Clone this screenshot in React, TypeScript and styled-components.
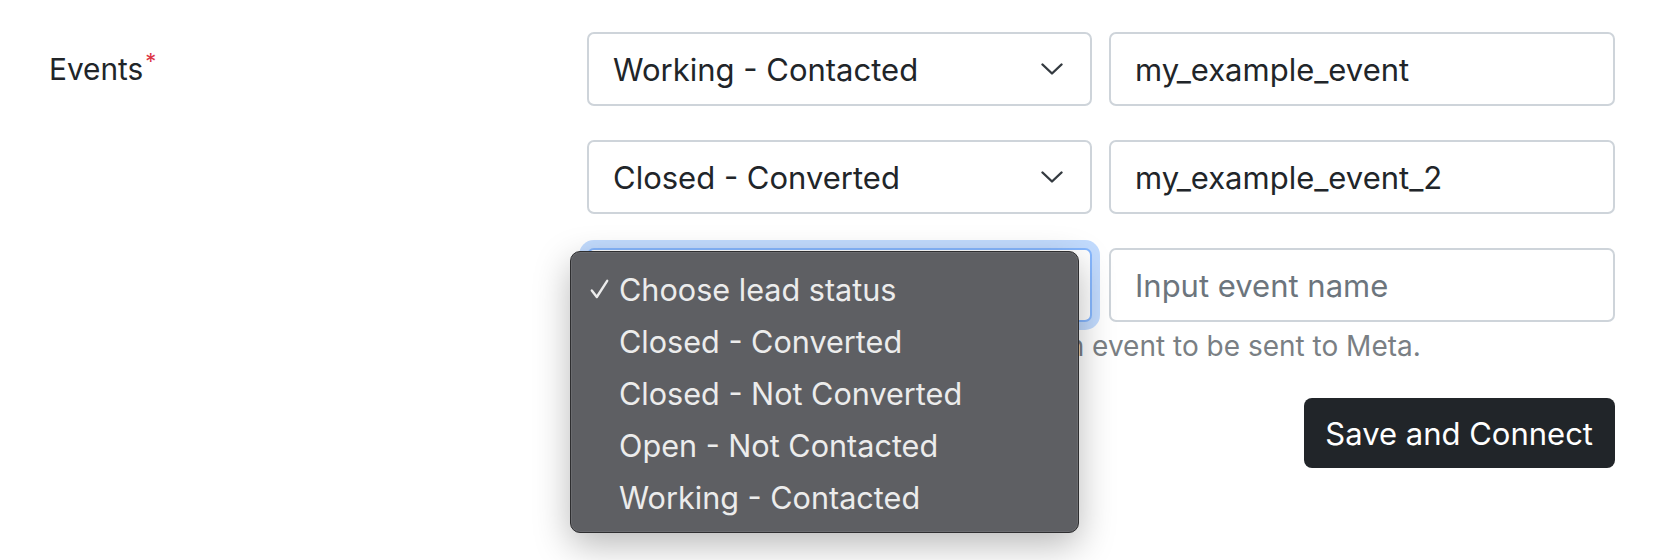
import React from "react";
import styled, { createGlobalStyle, css } from "styled-components";

const GlobalStyle = createGlobalStyle`
  html, body { margin: 0; padding: 0; background: #ffffff; }
  body {
    font-family: Inter, "Noto Sans", "Liberation Sans", sans-serif;
    color: #212529;
    -webkit-font-smoothing: antialiased;
  }
`;

const Page = styled.div`
  box-sizing: border-box;
  min-height: 560px;
  display: grid;
  grid-template-columns: 522px 1fr;
  align-items: start;
  column-gap: 16px;
  padding: 32px 49px 0 49px;
`;

const Label = styled.div`
  font-size: 29.8px;
  line-height: 74px;
  color: #212529;
  white-space: nowrap;
`;

const Required = styled.span`
  color: #dc3545;
  font-size: 22px;
  position: relative;
  top: -11px;
  margin-left: 2px;
`;

const Controls = styled.div`
  display: flex;
  flex-direction: column;
`;

const Rows = styled.div`
  display: flex;
  flex-direction: column;
  gap: 34px;
`;

const EventRow = styled.div`
  display: grid;
  grid-template-columns: 505px 506px;
  column-gap: 17px;
`;

const fieldBase = css`
  box-sizing: border-box;
  height: 74px;
  border: 2px solid #ced4da;
  border-radius: 7px;
  padding: 0 24px;
  font-family: inherit;
  font-size: 31px;
  color: #212529;
  background: #ffffff;
`;

const SelectBox = styled.div<{ $focused?: boolean }>`
  ${fieldBase};
  position: relative;
  display: flex;
  align-items: center;
  justify-content: space-between;
  ${(p) =>
    p.$focused &&
    css`
      border-color: #86b7fe;
      box-shadow: 0 0 0 8px rgba(13, 110, 253, 0.25);
    `}
`;

const SelectValue = styled.span`
  white-space: nowrap;
`;

const Chevron = styled.svg`
  width: 22px;
  height: 12px;
  margin-right: 3px;
  flex: none;
`;

const TextInput = styled.input`
  ${fieldBase};
  width: 100%;
  outline: none;
  &::placeholder {
    color: #6c757d;
    opacity: 1;
  }
`;

const HelpText = styled.div`
  margin-top: 3px;
  font-size: 28px;
  line-height: 42px;
  color: #7a7f84;
  white-space: nowrap;
`;

const ButtonRow = styled.div`
  display: flex;
  justify-content: flex-end;
  margin-top: 31px;
`;

const PrimaryButton = styled.button`
  box-sizing: border-box;
  height: 70px;
  padding: 0 22px 0 21px;
  border: none;
  border-radius: 8px;
  background: #212529;
  color: #ffffff;
  font-family: inherit;
  font-size: 31px;
  cursor: pointer;
`;

const Popup = styled.div`
  position: absolute;
  left: -19px;
  top: 1px;
  width: 509px;
  box-sizing: border-box;
  padding: 11px 0 9px;
  background: #5e5f63;
  border: 1px solid #2e2e30;
  border-radius: 10px;
  box-shadow: 0 0 0 1px rgba(255, 255, 255, 0.08) inset,
    0 12px 36px rgba(0, 0, 0, 0.28);
  z-index: 10;
`;

const PopupItem = styled.div`
  display: flex;
  align-items: center;
  height: 52px;
  padding-left: 48px;
  position: relative;
  font-size: 30.6px;
  color: #ececec;
  white-space: nowrap;
`;

const CheckMark = styled.svg`
  position: absolute;
  left: 19px;
  top: 16px;
  width: 19px;
  height: 20px;
`;

const ChevronIcon = () => (
  <Chevron viewBox="0 0 22 12" fill="none">
    <path
      d="M1.5 1.5 L11 10.5 L20.5 1.5"
      stroke="#343a40"
      strokeWidth="2.4"
      strokeLinecap="round"
      strokeLinejoin="round"
    />
  </Chevron>
);

const options = [
  "Choose lead status",
  "Closed - Converted",
  "Closed - Not Converted",
  "Open - Not Contacted",
  "Working - Contacted",
];

export default function App() {
  return (
    <>
      <GlobalStyle />
      <Page>
        <Label>
          Events<Required>*</Required>
        </Label>
        <Controls>
          <Rows>
            <EventRow>
              <SelectBox>
                <SelectValue>Working - Contacted</SelectValue>
                <ChevronIcon />
              </SelectBox>
              <TextInput defaultValue="my_example_event" />
            </EventRow>
            <EventRow>
              <SelectBox>
                <SelectValue>Closed - Converted</SelectValue>
                <ChevronIcon />
              </SelectBox>
              <TextInput defaultValue="my_example_event_2" />
            </EventRow>
            <EventRow>
              <SelectBox $focused>
                <SelectValue>Choose lead status</SelectValue>
                <ChevronIcon />
                <Popup>
                  {options.map((o, i) => (
                    <PopupItem key={o}>
                      {i === 0 && (
                        <CheckMark viewBox="0 0 19 20" fill="none">
                          <path
                            d="M1.8 11.5 L6.8 18 L17.2 1.8"
                            stroke="#ececec"
                            strokeWidth="2.4"
                            strokeLinecap="round"
                            strokeLinejoin="round"
                          />
                        </CheckMark>
                      )}
                      {o}
                    </PopupItem>
                  ))}
                </Popup>
              </SelectBox>
              <TextInput placeholder="Input event name" />
            </EventRow>
          </Rows>
          <HelpText>
            Choose a lead status, then specify an event to be sent to Meta.
          </HelpText>
          <ButtonRow>
            <PrimaryButton>Save and Connect</PrimaryButton>
          </ButtonRow>
        </Controls>
      </Page>
    </>
  );
}
